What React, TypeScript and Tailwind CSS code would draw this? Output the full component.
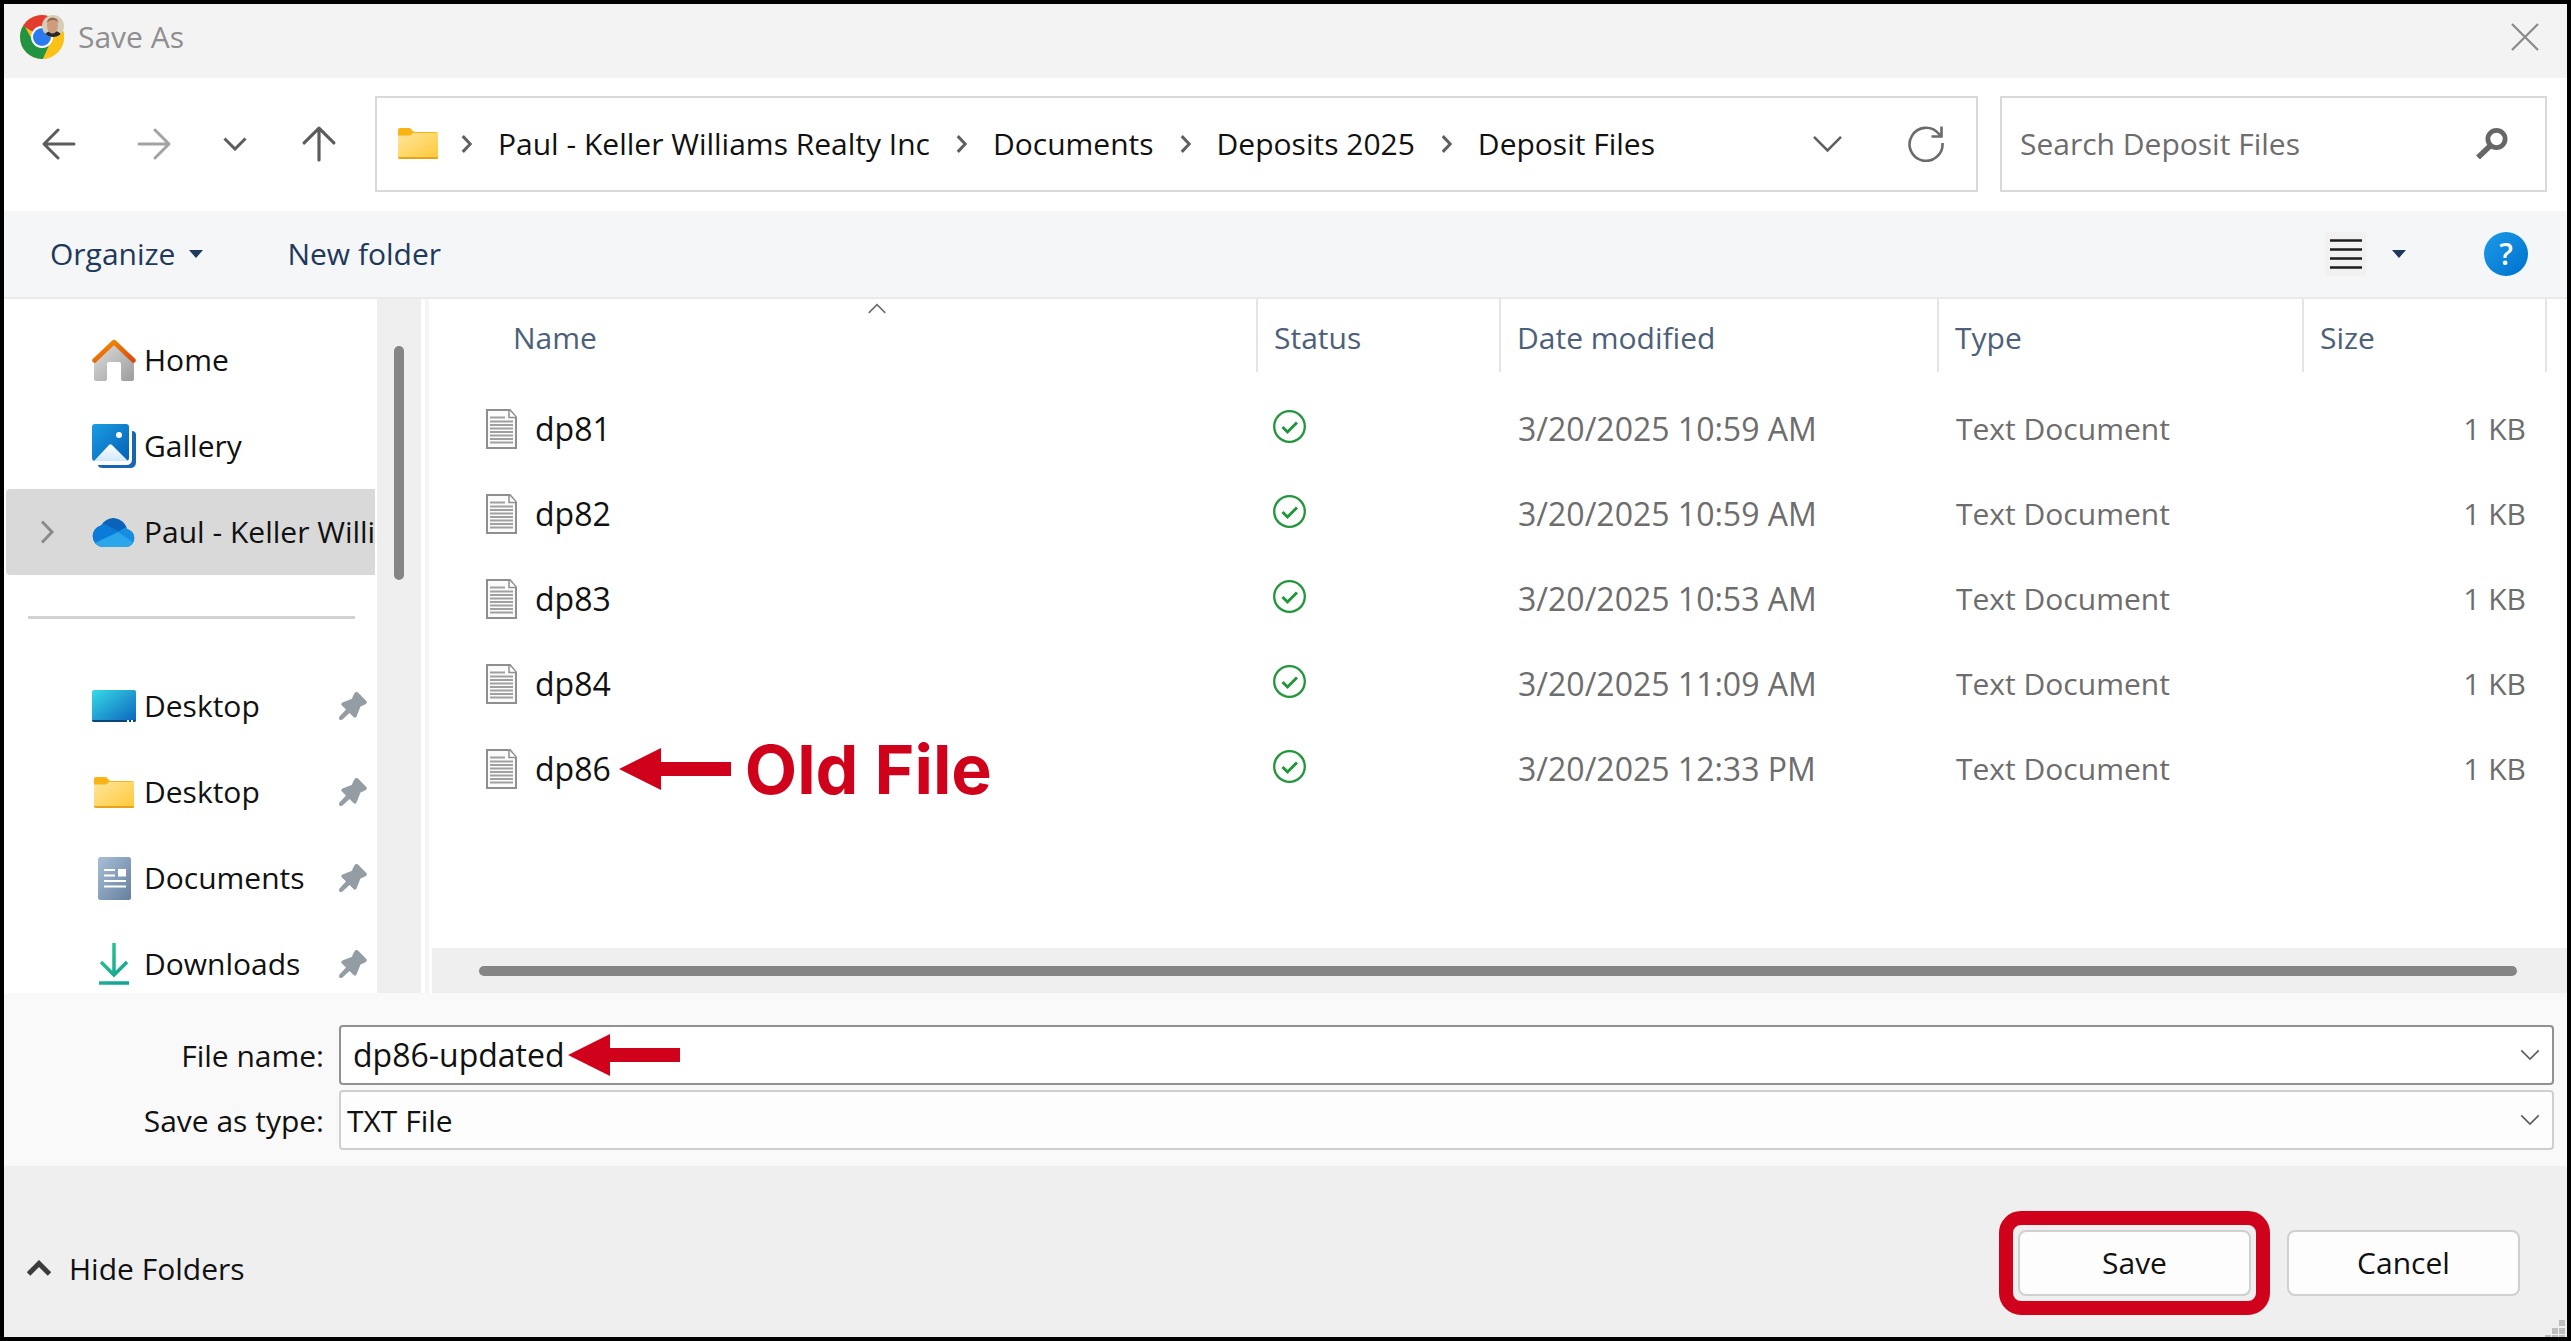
import type { ReactNode } from "react";

const UI = "font-['Open_Sans','Noto_Sans',sans-serif]";

type IconProps = { className?: string };

function ChromeIcon() {
  return (
    <svg className="size-11 shrink-0" viewBox="0 0 44 44" aria-hidden="true">
      <defs>
        <clipPath id="chrome-clip">
          <circle cx="22" cy="22" r="22" />
        </clipPath>
        <clipPath id="avatar-clip">
          <circle cx="33" cy="11" r="11" />
        </clipPath>
      </defs>
      <g clipPath="url(#chrome-clip)">
        <rect width="44" height="44" fill="#fbc116" />
        <path d="M22 22 L2.9 11 L-4 -6 H50 V12 H22 Z" fill="#e33b2e" />
        <path d="M13.4 27 L4.5 11 L-6 12 V50 H20 L31 27 L22 22 Z" fill="#229342" />
        <path d="M31 26 L22 46 H50 V12 H22 Z" fill="#fbc116" />
      </g>
      <circle cx="22" cy="22" r="11" fill="#fff" />
      <circle cx="22" cy="22" r="9" fill="#2a7bf0" />
      <g clipPath="url(#avatar-clip)">
        <rect x="22" width="22" height="22" fill="#d6cdb8" />
        <path d="M24 22 C25 17 29 16 33 16 S41 17 42 22 Z" fill="#2b2a2b" />
        <ellipse cx="32.500" cy="10.500" rx="5.500" ry="8" fill="#cf9c80" />
        <path d="M27 8 C27 1 38 1 38.500 8 C37 4 29 4 27 8 Z" fill="#94684a" />
      </g>
    </svg>
  );
}

function ArrowIcon({ className }: IconProps) {
  return (
    <svg className={className} viewBox="0 0 34 34" fill="none" stroke="currentColor" strokeWidth="3" strokeLinecap="round" strokeLinejoin="round" aria-hidden="true">
      <path d="M32 17 H3 M16 3 L2 17 L16 31" />
    </svg>
  );
}

function Chevron({ className, weight = 3 }: IconProps & { weight?: number }) {
  return (
    <svg className={className} viewBox="0 0 24 14" fill="none" stroke="currentColor" strokeWidth={weight} aria-hidden="true">
      <path d="M1.500 1.500 L12 12 L22.500 1.500" />
    </svg>
  );
}

function ChevronRight({ className, weight = 3 }: IconProps & { weight?: number }) {
  return (
    <svg className={className} viewBox="0 0 14 24" fill="none" stroke="currentColor" strokeWidth={weight} aria-hidden="true">
      <path d="M2 1.500 L12 12 L2 22.500" />
    </svg>
  );
}

function Triangle() {
  return (
    <svg className="h-2 w-3.5" viewBox="0 0 14 8" fill="#1e395b" aria-hidden="true">
      <path d="M0 0 H14 L7 8 Z" />
    </svg>
  );
}

function FolderIcon({ className }: IconProps) {
  return (
    <svg className={className} viewBox="0 0 40 31" aria-hidden="true">
      <defs>
        <linearGradient id="folder-face" x1="0" y1="0" x2="1" y2="1">
          <stop offset="0" stopColor="#ffe59c" />
          <stop offset="1" stopColor="#ffc937" />
        </linearGradient>
      </defs>
      <path d="M0 2 Q0 0 2 0 H12 L16 4 H38 Q40 4 40 6 V12 H0 Z" fill="#f9b316" />
      <path d="M0 7.500 H12 L15 5 H40 V31 H2 Q0 31 0 29 Z" fill="url(#folder-face)" />
      <path d="M0 29 H40 Q40 31 38 31 H2 Q0 31 0 29 Z" fill="#e9a31b" />
    </svg>
  );
}

function HomeIcon() {
  return (
    <svg className="h-[42px] w-11" viewBox="0 0 44 42" aria-hidden="true">
      <defs>
        <linearGradient id="home-wall" x1="0" y1="0" x2="1" y2="1">
          <stop offset="0" stopColor="#dedede" />
          <stop offset="1" stopColor="#9c9c9c" />
        </linearGradient>
        <linearGradient id="home-roof" x1="0" y1="0" x2="1" y2="1">
          <stop offset="0" stopColor="#f59300" />
          <stop offset="1" stopColor="#d9480f" />
        </linearGradient>
      </defs>
      <path d="M22 5 L42 23 V40 Q42 42 40 42 H31 Q29 42 29 40 V25 Q29 23 27 23 H17 Q15 23 15 25 V40 Q15 42 13 42 H4 Q2 42 2 40 V23 Z" fill="url(#home-wall)" />
      <path d="M2.500 21.500 L22 3 L41.500 21.500" fill="none" stroke="url(#home-roof)" strokeWidth="4.500" strokeLinecap="round" strokeLinejoin="round" />
    </svg>
  );
}

function GalleryIcon() {
  return (
    <svg className="size-11" viewBox="0 0 44 44" aria-hidden="true">
      <defs>
        <linearGradient id="gallery-sky" x1="0" y1="0" x2="1" y2="1">
          <stop offset="0" stopColor="#1b9de2" />
          <stop offset="1" stopColor="#0460b4" />
        </linearGradient>
        <linearGradient id="gallery-hill" x1="0" y1="0" x2="0" y2="1">
          <stop offset="0" stopColor="#ffffff" />
          <stop offset="1" stopColor="#cfe8fb" />
        </linearGradient>
      </defs>
      <path d="M40 7 Q44 7 44 11 V38 Q44 44 38 44 H11 Q6 44 6 41 H34 Q40 41 40 35 Z" fill="#1766ae" />
      <rect width="37" height="37" rx="3" fill="url(#gallery-sky)" />
      <path d="M2 37 L17 21 Q18.500 19.500 20 21 L36 37 Z" fill="url(#gallery-hill)" />
      <circle cx="27" cy="11" r="3" fill="#fff" />
    </svg>
  );
}

function CloudIcon() {
  return (
    <svg className="h-[29px] w-11" viewBox="0 0 44 29" aria-hidden="true">
      <defs>
        <clipPath id="cloud-shape">
          <path d="M10 29 A11 11 0 0 1 9 7.500 A14 14 0 0 1 35 11 A9.200 9.200 0 0 1 35 29 Z" />
        </clipPath>
      </defs>
      <g clipPath="url(#cloud-shape)">
        <rect width="44" height="29" fill="#0a63b8" />
        <path d="M-2 6 H13 L28 14 L6 29 H-2 Z" fill="#0c7ad8" />
        <path d="M24 15 L34 9 H46 V29 H38 Z" fill="#168de0" />
        <path d="M3 25 L26 14 L42 25 V29 H3 Z" fill="#29a7ea" />
      </g>
    </svg>
  );
}

function DesktopIcon() {
  return (
    <svg className="h-8 w-11" viewBox="0 0 44 32" aria-hidden="true">
      <defs>
        <linearGradient id="desktop-face" x1="0" y1="0" x2="1" y2="1">
          <stop offset="0" stopColor="#36dbe6" />
          <stop offset="1" stopColor="#0b63bd" />
        </linearGradient>
      </defs>
      <rect width="44" height="32" rx="2" fill="url(#desktop-face)" />
      <path d="M0 30 H44 Q44 32 42 32 H2 Q0 32 0 30 Z" fill="#0b4578" />
      <path d="M35 31 H37 M39 31 H41" stroke="#fff" strokeWidth="2" />
    </svg>
  );
}

function DocumentsIcon() {
  return (
    <svg className="h-[43px] w-[33px]" viewBox="0 0 33 43" aria-hidden="true">
      <defs>
        <linearGradient id="documents-face" x1="0" y1="0" x2="1" y2="1">
          <stop offset="0" stopColor="#a7bfd6" />
          <stop offset="1" stopColor="#667f9d" />
        </linearGradient>
      </defs>
      <rect width="33" height="43" rx="2.500" fill="url(#documents-face)" />
      <path d="M6 13 H17 M6 18.500 H17 M6 24 H28 M6 29.500 H28" stroke="#fff" strokeWidth="2.200" />
      <rect x="20" y="12" width="8" height="7.500" fill="#fff" />
    </svg>
  );
}

function DownloadsIcon() {
  return (
    <svg className="h-[42px] w-[30px]" viewBox="0 0 30 42" fill="none" stroke="url(#download-line)" strokeWidth="3.500" aria-hidden="true">
      <defs>
        <linearGradient id="download-line" gradientUnits="userSpaceOnUse" x1="0" y1="0" x2="30" y2="30">
          <stop offset="0" stopColor="#35c98a" />
          <stop offset="1" stopColor="#10a596" />
        </linearGradient>
      </defs>
      <path d="M15 0 L15.010 32 M2 19 L15 32 L28 19 M0 40 L30 40.010" />
    </svg>
  );
}

function PinIcon() {
  return (
    <svg className="size-7 shrink-0" viewBox="0 0 28 28" fill="#949da3" aria-hidden="true">
      <path d="M16 0.500 Q17.500 -0.600 19 0.600 L27.300 9 Q28.600 10.500 27 12 Q24.500 13 21.500 14.500 L17.500 24.500 Q16.500 26.500 14.800 25.300 L10.500 21 L3.500 27.500 Q1.500 28.500 0.500 27.500 Q-0.500 26.500 0.500 24.500 L7 17.500 L2.700 13.200 Q1.500 11.500 3.500 10.500 L13 6.800 Q14 3.500 16 0.500 Z" />
    </svg>
  );
}

function TextFileIcon() {
  return (
    <svg className="h-10 w-[31px] shrink-0" viewBox="0 0 31 40" aria-hidden="true">
      <path d="M1 1 H24 L30 8 V39 H1 Z" fill="#fbfbfb" stroke="#8f8f8f" strokeWidth="2" />
      <path d="M23 1 V8.500 H30" fill="#fff" stroke="#8f8f8f" strokeWidth="1.500" />
      <path d="M4 8.500 H19 M4 12.500 H27 M4 16 H27 M4 19.500 H27 M4 23 H27 M4 26.500 H27 M4 30 H27 M4 33.500 H27" stroke="#a0a0a0" strokeWidth="1.800" />
    </svg>
  );
}

function SyncedIcon() {
  return (
    <svg className="size-[33px]" viewBox="0 0 33 33" fill="none" stroke="#22963a" role="img" aria-label="Available on this device">
      <circle cx="16.500" cy="16.500" r="15.300" strokeWidth="2.300" />
      <path d="M9.500 17 L14.500 22 L24 12.500" strokeWidth="3" />
    </svg>
  );
}

function RefreshIcon() {
  return (
    <svg className="size-9" viewBox="0 0 36 36" fill="none" stroke="#6b6b6b" strokeWidth="2.600" aria-hidden="true">
      <path d="M34.500 17 A16.500 16.500 0 1 1 30.500 7.500 L33 10" />
      <path d="M33.500 0.500 V10.500 H23.500" />
    </svg>
  );
}

function MagnifierIcon() {
  return (
    <svg className="h-[31px] w-8 shrink-0" viewBox="0 0 32 31" fill="none" stroke="#666" aria-hidden="true">
      <circle cx="20.500" cy="11" r="8.600" strokeWidth="4.800" />
      <path d="M14 18 L2 29.500" strokeWidth="5.500" />
    </svg>
  );
}

function CloseIcon() {
  return (
    <svg className="size-7" viewBox="0 0 28 28" stroke="#8a8a8a" strokeWidth="2.200" aria-hidden="true">
      <path d="M1 1 L27 27 M27 1 L1 27" />
    </svg>
  );
}

function RedArrow({ className }: IconProps) {
  return (
    <svg className={className} viewBox="0 0 112 42" fill="#d0021b" aria-hidden="true">
      <path d="M0 21 L42 0 V14 H112 V28 H42 V42 Z" />
    </svg>
  );
}

function ResizeGrip() {
  return (
    <svg className="absolute right-0.5 bottom-0 h-[17px] w-5" viewBox="0 0 20 17" fill="#bdbdbd" aria-hidden="true">
      <path d="M14 0 h6 v6 h-6 Z M14 8 h6 v6 h-6 Z M7 8 h6 v6 h-6 Z M14 15 h6 v2 h-6 Z M7 15 h6 v2 h-6 Z M0 15 h6 v2 h-6 Z" />
    </svg>
  );
}

const crumbs = ["Paul - Keller Williams Realty Inc", "Documents", "Deposits 2025", "Deposit Files"];

const files = [
  { name: "dp81", date: "3/20/2025 10:59 AM" },
  { name: "dp82", date: "3/20/2025 10:59 AM" },
  { name: "dp83", date: "3/20/2025 10:53 AM" },
  { name: "dp84", date: "3/20/2025 11:09 AM" },
  { name: "dp86", date: "3/20/2025 12:33 PM", old: true },
];

function SidebarItem({ icon, label, pinned, selected }: { icon: ReactNode; label: string; pinned?: boolean; selected?: boolean }) {
  return (
    <li className={selected ? "ml-0.5 rounded-l bg-[#d9d9d9]" : "ml-0.5"}>
      <button type="button" className="flex h-[86px] w-full items-center pl-[34px] text-left">
        <span className="flex w-[52px] shrink-0 items-center">
          {selected && <ChevronRight className="h-6 w-3.5 text-[#8a8a8a]" />}
        </span>
        <span className="flex w-11 shrink-0 justify-center">{icon}</span>
        <span className="ml-2 min-w-0 flex-1 overflow-hidden whitespace-nowrap">{label}</span>
        {pinned && (
          <span className="pr-2">
            <PinIcon />
          </span>
        )}
      </button>
    </li>
  );
}

function HeaderCell({ children, className }: { children: ReactNode; className?: string }) {
  return (
    <th scope="col" className={`h-[73px] border-r-2 border-[#e5e5e5] pt-1 pb-0 text-left font-normal text-[#4c607a] ${className ?? ""}`}>
      {children}
    </th>
  );
}

export default function App() {
  return (
    <div className={`${UI} flex h-screen flex-col border-4 border-black bg-white text-[30px] leading-10 text-[#111]`}>
      <header className="flex h-[74px] shrink-0 items-center bg-[#f3f3f3] pr-7 pb-2 pl-4">
        <ChromeIcon />
        <h1 className="ml-3.5 flex-1 text-[#8f8f8f]">Save As</h1>
        <button type="button" aria-label="Close">
          <CloseIcon />
        </button>
      </header>

      <nav className="flex h-[133px] shrink-0 items-center pr-5 pb-0.5 pl-[38px]" aria-label="Location">
        <button type="button" aria-label="Back">
          <ArrowIcon className="size-[34px] text-[#5c5c5c]" />
        </button>
        <button type="button" aria-label="Forward" className="ml-[61px]">
          <ArrowIcon className="size-[34px] rotate-180 text-[#a3a3a3]" />
        </button>
        <button type="button" aria-label="Recent locations" className="ml-[52px]">
          <Chevron className="h-3.5 w-6 text-[#5c5c5c]" />
        </button>
        <button type="button" aria-label="Up" className="ml-[54px]">
          <ArrowIcon className="size-9 rotate-90 text-[#5c5c5c]" />
        </button>
        <div className="ml-[38px] flex h-24 flex-1 items-center border-2 border-[#d9d9d9] pr-8 pl-[21px]">
          <FolderIcon className="h-[31px] w-10" />
          <ol className="ml-[23px] flex flex-1 items-center">
            {crumbs.map((crumb) => (
              <li key={crumb} className="mr-[26px] flex items-center gap-[26px]">
                <ChevronRight weight={4} className="h-[18px] w-[11px] text-[#5f5f5f]" />
                <a href="#" className="whitespace-nowrap">{crumb}</a>
              </li>
            ))}
          </ol>
          <button type="button" aria-label="Previous locations">
            <Chevron weight={2} className="h-[18px] w-[31px] text-[#5f5f5f]" />
          </button>
          <button type="button" aria-label="Refresh" className="ml-[65px]">
            <RefreshIcon />
          </button>
        </div>
        <div className="ml-[22px] flex h-24 w-[547px] items-center border-2 border-[#d9d9d9] pr-[37px] pl-[18px]">
          <input
            type="search"
            aria-label="Search Deposit Files"
            placeholder="Search Deposit Files"
            className="min-w-0 flex-1 bg-transparent outline-none placeholder:text-[#6d6d6d]"
          />
          <MagnifierIcon />
        </div>
      </nav>

      <div className="flex h-[88px] shrink-0 items-center border-b-2 border-[#e8eaec] bg-[#f5f6f8] pr-[39px] pl-[46px] text-[#1e395b]">
        <button type="button" className="flex items-center gap-3.5">
          Organize <Triangle />
        </button>
        <button type="button" className="ml-[84px]">New folder</button>
        <button type="button" aria-label="Change your view" className="ml-auto flex items-center gap-[25px]">
          <span className="flex h-11 w-[42px] items-center justify-center rounded bg-[#f1f1f1]">
            <svg className="h-8 w-8" viewBox="0 0 32 32" stroke="#1c1c1c" strokeWidth="2.500" aria-hidden="true">
              <path d="M0 2.500 H32 M0 11.500 H32 M0 20.500 H32 M0 29.500 H32" />
            </svg>
          </span>
          <Triangle />
        </button>
        <button
          type="button"
          aria-label="Help"
          className="ml-[78px] flex size-11 items-center justify-center rounded-full bg-linear-to-br from-[#1d9be6] to-[#0070cf] font-semibold text-white"
        >
          ?
        </button>
      </div>

      <main className="flex min-h-0 flex-1">
        <aside className="flex w-[417px] shrink-0" aria-label="Folders">
          <div className="min-w-0 flex-1 overflow-hidden pt-[18px] pr-0.5">
            <ul>
              <SidebarItem icon={<HomeIcon />} label="Home" />
              <SidebarItem icon={<GalleryIcon />} label="Gallery" />
              <SidebarItem icon={<CloudIcon />} label="Paul - Keller Williams Realty Inc" selected />
            </ul>
            <hr className="mt-[41px] mr-5 mb-11 ml-6 border-t-[3px] border-[#d2d2d2]" />
            <ul>
              <SidebarItem icon={<DesktopIcon />} label="Desktop" pinned />
              <SidebarItem icon={<FolderIcon className="h-[31px] w-10" />} label="Desktop" pinned />
              <SidebarItem icon={<DocumentsIcon />} label="Documents" pinned />
              <SidebarItem icon={<DownloadsIcon />} label="Downloads" pinned />
            </ul>
          </div>
          <div className="w-11 bg-[#efefef] pt-[47px] pl-[17px]">
            <div className="h-[234px] w-2.5 rounded-full bg-[#858585]" />
          </div>
        </aside>

        <section className="ml-1 flex min-w-0 flex-1 flex-col border-l-4 border-[#f5f5f5] pl-[3px]" aria-label="Files">
          <div className="flex-1 pr-5">
            <table className="w-full table-fixed border-collapse">
              <colgroup>
                <col />
                <col className="w-[243px]" />
                <col className="w-[438px]" />
                <col className="w-[365px]" />
                <col className="w-[243px]" />
              </colgroup>
              <thead>
                <tr>
                  <HeaderCell className="relative pl-[81px]">
                    Name
                    <Chevron weight={2} className="absolute top-1 left-[435px] h-[11px] w-5 rotate-180 text-[#6d6d6d]" />
                  </HeaderCell>
                  <HeaderCell className="pl-4">Status</HeaderCell>
                  <HeaderCell className="pl-4">Date modified</HeaderCell>
                  <HeaderCell className="pl-4">Type</HeaderCell>
                  <HeaderCell className="pl-4">Size</HeaderCell>
                </tr>
                <tr aria-hidden="true">
                  <td colSpan={5} className="h-3.5 p-0" />
                </tr>
              </thead>
              <tbody className="text-[#6d6d6d]">
                {files.map((file) => (
                  <tr key={file.name}>
                    <td className="h-[85px] p-0 pl-[54px] text-[32px] text-[#111]">
                      <div className="flex items-center">
                        <TextFileIcon />
                        <span className="ml-[18px]">{file.name}</span>
                        {file.old && (
                          <>
                            <RedArrow className="ml-2 h-[42px] w-28" />
                            <strong className="ml-3.5 font-['Inter',sans-serif] text-[68px] leading-none font-bold whitespace-nowrap text-[#d0021b]">
                              Old File
                            </strong>
                          </>
                        )}
                      </div>
                    </td>
                    <td className="p-0 pb-1 pl-4">
                      <SyncedIcon />
                    </td>
                    <td className="p-0 pl-[18px] text-[32px] whitespace-nowrap">{file.date}</td>
                    <td className="p-0 pl-[18px] whitespace-nowrap">Text Document</td>
                    <td className="p-0 pr-5 text-right">1 KB</td>
                  </tr>
                ))}
              </tbody>
            </table>
          </div>
          <div className="flex h-[45px] items-center bg-[#efefef] pr-[50px] pl-[47px]">
            <div className="h-2.5 w-full rounded-full bg-[#858585]" />
          </div>
        </section>
      </main>

      <form className="shrink-0">
        <div className="grid h-[173px] grid-cols-[320px_1fr] content-start items-center gap-x-[15px] gap-y-[5px] bg-[#f9f9f9] pt-8 pr-[13px]">
          <label htmlFor="file-name" className="pt-0.5 text-right">File name:</label>
          <div className="relative flex h-[60px] items-center rounded-sm border-2 border-[#919191] bg-white pr-3 pl-3">
            <input id="file-name" type="text" defaultValue="dp86-updated" className="min-w-0 flex-1 bg-transparent text-[32px] outline-none" />
            <RedArrow className="absolute left-[227px] h-[42px] w-28" />
            <button type="button" aria-label="Previous file names">
              <Chevron weight={2} className="h-3 w-5 text-[#5f5f5f]" />
            </button>
          </div>
          <label htmlFor="file-type" className="pt-0.5 text-right">Save as type:</label>
          <div className="relative flex h-[60px] items-center rounded-sm border-2 border-[#cfcfcf] bg-[#fdfdfd]">
            <select id="file-type" className="h-full w-full appearance-none bg-transparent px-1.5 pt-0.5 outline-none">
              <option>TXT File</option>
            </select>
            <Chevron weight={2} className="pointer-events-none absolute right-3 h-3 w-5 text-[#5f5f5f]" />
          </div>
        </div>
        <div className="relative flex h-[171px] items-center bg-[#efefef] pt-[22px] pr-[47px] pl-[23px]">
          <button type="button" className="mt-3 mr-auto flex items-center gap-[18px]">
            <Chevron weight={5} className="h-[17px] w-6 rotate-180 text-[#3c3c3c]" />
            Hide Folders
          </button>
          <div className="rounded-[22px] border-[14px] border-[#d0021b] p-[5px]">
            <button type="submit" className="h-[66px] w-[233px] rounded-lg border-2 border-[#d0d0d0] bg-[#fdfdfd]">Save</button>
          </div>
          <button type="button" className="ml-[17px] h-[66px] w-[233px] rounded-lg border-2 border-[#d0d0d0] bg-[#fdfdfd]">Cancel</button>
          <ResizeGrip />
        </div>
      </form>
    </div>
  );
}
